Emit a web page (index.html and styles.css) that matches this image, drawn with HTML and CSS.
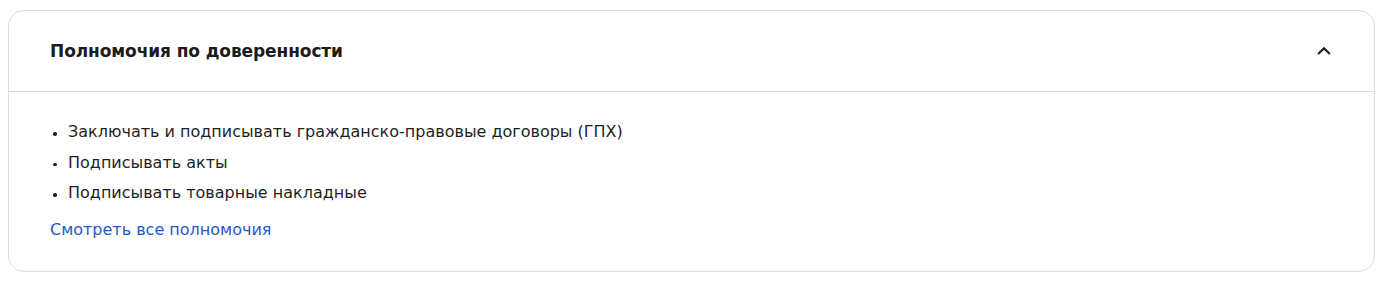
FILE: index.html
```html
<!DOCTYPE html>
<html lang="ru">
<head>
<meta charset="utf-8">
<link rel="stylesheet" href="styles.css">
</head>
<body>
<section class="card">
  <header class="card-head">
    <h2 class="card-title">Полномочия по доверенности</h2>
    <button class="toggle" aria-label="Свернуть">
      <svg width="16" height="16" viewBox="0 0 16 16"><path d="M2.2 11 8 5.2l5.8 5.8" fill="none" stroke="#1f1f1f" stroke-width="2.2" stroke-linecap="butt" stroke-linejoin="miter"/></svg>
    </button>
  </header>
  <div class="card-body">
    <ul class="list">
      <li>Заключать и подписывать гражданско-правовые договоры (ГПХ)</li>
      <li>Подписывать акты</li>
      <li>Подписывать товарные накладные</li>
    </ul>
    <a class="more" href="#">Смотреть все полномочия</a>
  </div>
</section>
</body>
</html>
```
FILE: styles.css
```css
html, body { margin: 0; padding: 0; background: #fff; }
body { padding: 10px 0 0 8px; font-family: "DejaVu Sans", sans-serif; color: #1f1f1f; }
.card {
  width: 1367px;
  box-sizing: border-box;
  border: 1px solid #d9dde3;
  border-radius: 16px;
  height: 262px;
}
.card-head {
  height: 81px;
  box-sizing: border-box;
  border-bottom: 1px solid #d9dde3;
  display: flex;
  align-items: center;
  justify-content: space-between;
  padding: 0 40px 0 41px;
}
.card-title { margin: 0; font-size: 17px; font-weight: 700; letter-spacing: -0.1px; color: #1c1c1c; }
.toggle { border: 0; background: none; padding: 0; width: 16px; height: 16px; margin-right: 2px; display: flex; }
.card-body { padding: 25px 41px 0; }
.list { margin: 0; padding: 0; list-style: none; }
.list li { font-size: 16px; line-height: 30.5px; position: relative; padding-left: 18px; }
.list li::before {
  content: ""; position: absolute; left: 3px; top: 15px; width: 3.5px; height: 3.5px; border-radius: 50%; background: #1f1f1f;
}
.more { display: inline-block; margin-top: 9px; font-size: 16px; line-height: 24px; color: #1d5bc9; text-decoration: none; }
```
